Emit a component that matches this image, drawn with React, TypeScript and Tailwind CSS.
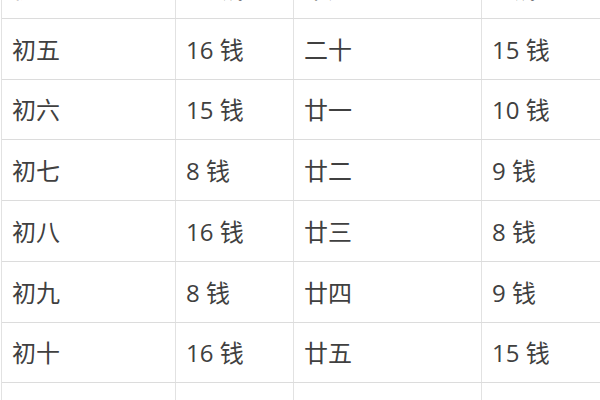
const rows: [string, string, string, string][] = [
  ['初四', '15 钱', '十九', '5 钱'],
  ['初五', '16 钱', '二十', '15 钱'],
  ['初六', '15 钱', '廿一', '10 钱'],
  ['初七', '8 钱', '廿二', '9 钱'],
  ['初八', '16 钱', '廿三', '8 钱'],
  ['初九', '8 钱', '廿四', '9 钱'],
  ['初十', '16 钱', '廿五', '15 钱'],
  ['十一', '9 钱', '廿六', '18 钱'],
];

const widths = ['w-[174px]', 'w-[118px]', 'w-[188px]', 'flex-1'];

export default function App() {
  return (
    <div
      className="w-[600px] h-[400px] overflow-hidden bg-white text-[#404040]"
      style={{ fontFamily: '"Open Sans", "Noto Sans CJK SC", sans-serif' }}
    >
      <div className="mt-[-42px] ml-[1px] border-l border-[#e2e2e2]">
        {rows.map((row, i) => (
          <div key={i} className="flex h-[60.75px] border-b border-[#dcdcdc]">
            {row.map((cell, j) => (
              <div
                key={j}
                className={`${widths[j]} flex items-center pl-[10px] pt-[2px] text-[24px] leading-none ${
                  j < 3 ? 'border-r border-[#e2e2e2]' : ''
                }`}
              >
                {cell}
              </div>
            ))}
          </div>
        ))}
      </div>
    </div>
  );
}
